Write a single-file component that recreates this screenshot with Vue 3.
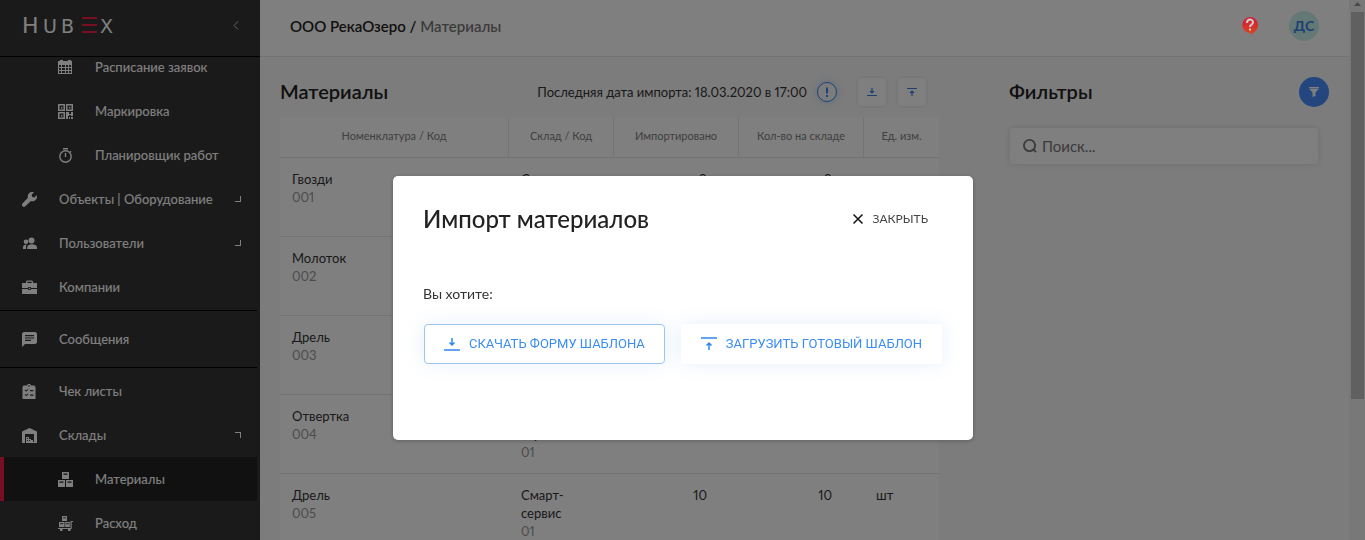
<script setup>
import { ref } from 'vue'

const search = ref('')

const groups = [
  [
    { label: 'Расписание заявок', icon: 'calendar', child: true },
    { label: 'Маркировка', icon: 'qr', child: true },
    { label: 'Планировщик работ', icon: 'timer', child: true },
    { label: 'Объекты | Оборудование', icon: 'wrench', arrow: 'down' },
    { label: 'Пользователи', icon: 'users', arrow: 'down' },
    { label: 'Компании', icon: 'case' }
  ],
  [{ label: 'Сообщения', icon: 'chat' }],
  [
    { label: 'Чек листы', icon: 'checklist' },
    { label: 'Склады', icon: 'warehouse', arrow: 'up' },
    { label: 'Материалы', icon: 'boxes', child: true, active: true },
    { label: 'Расход', icon: 'cart', child: true }
  ]
]

const icons = {
  calendar: 'M2 0h3v1h5V0h3v1h1v13H0V1h2zM1 5v2h2V5zM4 5v2h3V5zM8 5v2h2V5zM11 5v2h2V5zM1 8v2h2V8zM4 8v2h3V8zM8 8v2h2V8zM11 8v2h2V8zM1 11v2h2v-2zM4 11v2h3v-2zM8 11v2h2v-2zM11 11v2h2v-2z',
  qr: 'M0 0h7v7H0zM1.500 1.500v4h4v-4zM3 3h1.500v1.500H3zM8 0h7v7H8zM9.500 1.500v4h4v-4zM11 3h1.500v1.500H11zM0 8h7v7H0zM1.500 9.500v4h4v-4zM3 11h1.500v1.500H3zM8 8h3v2h2V8h2v4h-2v-1h-2v1h-1v3H8zM11 13h1v2h-1zM13 13h2v2h-2z',
  wrench: 'M14.800 3.200 12.400 5.600 10.300 5 9.600 2.700 12 .3C10.300-.3 8.200 0 6.900 1.400 5.700 2.600 5.400 4.300 5.900 5.800L.5 11.500C-.2 12.200-.2 13.400.5 14.200 1.300 15.100 2.600 15 3.300 14.300L8.900 8.900C10.500 9.500 12.300 9.200 13.600 7.900 14.900 6.700 15.300 4.800 14.800 3.200z',
  users: 'M9.500 1.500a3 3 0 1 1 0 6a3 3 0 0 1 0-6zM4 3.500a2.300 2.300 0 1 1 0 4.600A2.300 2.300 0 0 1 4 3.500zM5.200 13V11.500C5.200 9.500 7.500 8.300 10 8.300s5 1.200 5 3.200V13zM1 13v-2c0-1.500 1.500-2.300 3.500-2.400C4.200 9.500 4 10.300 4 11.500V13z',
  case: 'M4 3V1.500L5 .5h5l1 1V3h4v5H9V7H6v1H0V3zM5.300 3h4.400V1.700H5.300zM0 9h6v1h3V9h6v5H0zM6.800 7.700h1.400v1.600H6.800z',
  chat: 'M1.500 0h12L15 1.500v9L13.500 12H3l-3 3V1.500zM3 3v1.200h9V3zM3 5.400v1.200h9V5.400zM3 7.800V9h6V7.800z',
  checklist: 'M1.500 1.500H5C5 .5 6 0 7 0s2 .5 2 1.500h3.500L13.500 3v12H.5V3zM6 1.500v1h2v-1zM2.500 6l1.700 1.700L6.500 5.500 6 4.800 4.200 6.500l-1-1zM8 6v1.200h3.500V6zM2.500 10.500l1.700 1.700L6.500 10 6 9.300 4.200 11l-1-1zM8 10.500v1.200h3.500v-1.200z',
  warehouse: 'M7.500 0 15 3.500V15h-3V6H3v9H0V3.500zM4 9h3v2h2v1h2v2h1v1H4zM5 10v1h1v-1zM5 12v1h1v-1zM7 12v1h1v-1z',
  boxes: 'M4 0h7v7H4zM5.500 1.500v1.200h4V1.500zM0 8h7v7H0zM1.500 9.500v1.200h4V9.500zM8 8h7v7H8zM9.500 9.500v1.200h4V9.500z',
  cart: 'M4 0h5v5H4zM5.200 1.200v1h2.600v-1zM1 6h5.500v5H1zM2.200 7.200v1h3v-1zM7.200 6h4.600v5H7.200zM8.200 7.200v1h2.600v-1zM0 12h12.500V5H15v1h-1.300v7H12.500v2H10v-2H4.500v2H2v-2H0z'
}

const rows = [
  { name: 'Гвозди', code: '001', imported: '0', stock: '0' },
  { name: 'Молоток', code: '002', imported: '10', stock: '10' },
  { name: 'Дрель', code: '003', imported: '10', stock: '10' },
  { name: 'Отвертка', code: '004', imported: '10', stock: '10' },
  { name: 'Дрель', code: '005', imported: '10', stock: '10' }
]
</script>

<template>
  <div class="app">
    <aside class="sidebar">
      <div class="brand">
        <svg class="logo" viewBox="0 0 92 18" role="img" aria-label="HubEx">
          <text class="logo-big" x="-2" y="17">H</text>
          <text class="logo-small" x="19" y="17">U</text>
          <text class="logo-small" x="37" y="17">B</text>
          <path class="logo-bars" d="M58 1h15v2H58zM58 8h15v2H58zM58 15h15v2H58z" />
          <text class="logo-small" x="76" y="17">X</text>
        </svg>
        <button class="collapse" type="button" aria-label="Свернуть меню">
          <svg viewBox="0 0 6 9"><path d="M5 .5 1 4.500l4 4" /></svg>
        </button>
      </div>
      <nav class="nav">
        <ul v-for="(group, g) in groups" :key="g" class="group">
          <li v-for="item in group" :key="item.label">
            <a href="#" class="item" :class="{ child: item.child, active: item.active }">
              <svg v-if="item.icon === 'timer'" class="icon timer" viewBox="0 0 15 15">
                <circle cx="7.500" cy="8.500" r="5.700" />
                <path d="M5 .7h5M7.500 5v4M12 3.200l1 1" />
              </svg>
              <svg v-else class="icon" viewBox="0 0 15 15"><path fill-rule="evenodd" :d="icons[item.icon]" /></svg>
              <span class="label">{{ item.label }}</span>
              <span v-if="item.arrow" class="corner" :class="item.arrow"></span>
            </a>
          </li>
        </ul>
      </nav>
    </aside>

    <div class="main">
      <header class="topbar">
        <p class="crumbs">ООО РекаОзеро / <span>Материалы</span></p>
        <button class="help" type="button" aria-label="Помощь">
          <svg viewBox="0 0 16 18">
            <defs>
              <linearGradient id="help-fill" x1="0" y1="0" x2="0" y2="1">
                <stop offset="0" stop-color="#d41838" />
                <stop offset="1" stop-color="#d8481c" />
              </linearGradient>
            </defs>
            <path fill="url(#help-fill)" d="M8 0a8 8 0 0 1 8 8c0 5-4 7.500-7 10l-.5-2A8 8 0 1 1 8 0z" />
            <path class="question" d="M5 6c0-4.500 6-4.500 6-.6C11 7.500 8 7.700 8 10M8 11.500v2" />
          </svg>
        </button>
        <button class="avatar" type="button">ДС</button>
      </header>

      <div class="content">
        <section class="materials">
          <div class="toolbar">
            <h1>Материалы</h1>
            <p class="date">Последняя дата импорта: 18.03.2020 в 17:00</p>
            <svg class="info" viewBox="0 0 20 20"><circle cx="10" cy="10" r="9.500" /><path d="M10 5.500v6M10 13v2" /></svg>
            <button class="square" type="button" aria-label="Скачать">
              <svg viewBox="0 0 10 10"><path d="M0 8.500h10M5 1v5M3 4l2 2 2-2" /></svg>
            </button>
            <button class="square" type="button" aria-label="Загрузить">
              <svg viewBox="0 0 10 10"><path d="M0 1.500h10M5 9V4M3 6l2-2 2 2" /></svg>
            </button>
          </div>
          <table class="table">
            <colgroup>
              <col /><col class="c-stock" /><col class="c-num" /><col class="c-num" /><col class="c-unit" />
            </colgroup>
            <thead>
              <tr>
                <th>Номенклатура / Код</th>
                <th>Склад / Код</th>
                <th>Импортировано</th>
                <th>Кол-во на складе</th>
                <th>Ед. изм.</th>
              </tr>
            </thead>
            <tbody>
              <tr v-for="row in rows" :key="row.code">
                <td>{{ row.name }}<br /><span class="code">{{ row.code }}</span></td>
                <td>Смарт-<br />сервис<br /><span class="code">01</span></td>
                <td class="num">{{ row.imported }}</td>
                <td class="num">{{ row.stock }}</td>
                <td>шт</td>
              </tr>
            </tbody>
          </table>
        </section>

        <section class="filters">
          <div class="filters-head">
            <h2>Фильтры</h2>
            <button class="funnel" type="button" aria-label="Фильтр">
              <svg viewBox="0 0 10 10"><path d="M0 0h10v1H0zM0 1.500h10L6.500 5.500V9L3.500 10V5.500z" /></svg>
            </button>
          </div>
          <label class="search">
            <svg viewBox="0 0 15 15"><circle cx="7" cy="7" r="6" /><path d="M11 11l3 3" /></svg>
            <input v-model="search" type="text" placeholder="Поиск..." aria-label="Поиск" />
          </label>
        </section>
      </div>
    </div>

    <div class="scrollbar" aria-hidden="true">
      <svg viewBox="0 0 7 4"><path d="M3.500 0 7 4H0z" /></svg>
      <div class="thumb"></div>
    </div>

    <div class="overlay">
      <div class="modal" role="dialog" aria-modal="true" aria-labelledby="modal-title">
        <div class="modal-head">
          <h2 id="modal-title">Импорт материалов</h2>
          <button class="close" type="button">
            <svg viewBox="0 0 10 10"><path d="M.5.5l9 9M9.500.5l-9 9" /></svg>
            ЗАКРЫТЬ
          </button>
        </div>
        <p class="question-text">Вы хотите:</p>
        <div class="actions">
          <button class="action outlined" type="button">
            <svg viewBox="0 0 16 16"><path d="M0 14h16M8 2v7M5.500 6.500 8 9l2.500-2.500" /></svg>
            СКАЧАТЬ ФОРМУ ШАБЛОНА
          </button>
          <button class="action" type="button">
            <svg viewBox="0 0 16 16"><path d="M0 2h16M8 14V7M5.500 9.500 8 7l2.500 2.500" /></svg>
            ЗАГРУЗИТЬ ГОТОВЫЙ ШАБЛОН
          </button>
        </div>
      </div>
    </div>
  </div>
</template>

<style>
body {
  margin: 0;
  overflow: hidden;
}
</style>

<style scoped>
.app {
  display: flex;
  height: 100vh;
  overflow: hidden;
  font-family: Lato, "Open Sans", sans-serif;
  font-size: 13px;
  line-height: 18px;
  font-variant-numeric: proportional-nums;
  color: #333;
  background: #f8f8f8;
}
.app * { box-sizing: border-box; }
p, h1, h2, ul { margin: 0; padding: 0; }
ul { list-style: none; }
button {
  display: flex;
  align-items: center;
  justify-content: center;
  padding: 0;
  border: 0;
  background: none;
  font: inherit;
  color: inherit;
  cursor: pointer;
}
svg { display: block; flex: none; overflow: visible; }

.sidebar {
  display: flex;
  flex-direction: column;
  flex: none;
  width: 260px;
  background: #343434;
  color: #fff;
}
.brand {
  display: flex;
  flex: none;
  align-items: center;
  justify-content: space-between;
  height: 57px;
  padding: 0 21px 6px 24px;
  border-bottom: 1px solid #000;
}
.logo { width: 92px; height: 18px; fill: #fff; font-family: "DejaVu Sans", sans-serif; }
.logo-big { font-size: 22px; }
.logo-small { font-size: 19px; }
.logo-bars { fill: #f01c48; }
.collapse svg { width: 6px; height: 9px; fill: none; stroke: #ccc; }
.nav { flex: 1; overflow: hidden; }
.group {
  width: 257px;
  padding: 1px 0;
  border-bottom: 1px solid #000;
}
.group:first-child { margin-top: -13px; }
.group:nth-child(2) { padding: 6px 0; }
.group:last-child { border-bottom: 0; }
.item {
  display: flex;
  align-items: center;
  height: 44px;
  padding: 0 16px 0 22px;
  border-left: 0 solid #f01c48;
  color: #fff;
  font-weight: 500;
  text-decoration: none;
}
.item.child { padding-left: 58px; }
.item.active { padding-left: 54px; border-left-width: 4px; background: #222; }
.icon { width: 15px; height: 15px; fill: #fff; }
.timer { fill: none; stroke: #fff; stroke-width: 1.4; }
.label { flex: 1; margin-left: 22px; white-space: nowrap; }
.corner { width: 6px; height: 6px; border-right: 1px solid #fff; }
.corner.down { border-bottom: 1px solid #fff; }
.corner.up { border-top: 1px solid #fff; }

.main {
  display: flex;
  flex: 1;
  flex-direction: column;
  min-width: 0;
}
.topbar {
  display: flex;
  flex: none;
  align-items: center;
  height: 57px;
  padding: 0 30px 4px;
  border-bottom: 1px solid #e4e4e4;
  background: #fff;
}
.crumbs { flex: 1; color: #222; font-size: 15px; font-weight: 600; }
.crumbs span { color: #777; }
.help { position: relative; z-index: 2; margin-right: 31px; }
.help svg { width: 16px; height: 18px; }
.question { fill: none; stroke: #ccc; stroke-width: 2; }
.avatar {
  width: 30px;
  height: 30px;
  border-radius: 50%;
  background: #c8f0ea;
  color: #3d7ee8;
  font-size: 14px;
  font-weight: 700;
}
.content {
  display: flex;
  flex: 1;
  gap: 70px;
  padding: 20px;
}
.materials { flex: 1; min-width: 0; }
.toolbar {
  display: flex;
  align-items: center;
  height: 30px;
  margin-bottom: 10px;
  padding-right: 13px;
}
h1, .filters h2 { flex: 1; color: #222; font-size: 20px; font-weight: 600; line-height: 24px; }
.toolbar h1, .filters-head h2 { padding-bottom: 2px; }
.date { margin-right: 10px; white-space: nowrap; }
.info {
  width: 20px;
  height: 20px;
  margin-right: 21px;
  border-radius: 50%;
  box-shadow: 0 0 8px rgba(60, 140, 240, 0.3);
  fill: none;
  stroke: #2f86f0;
}
.info path { stroke-width: 2; }
.square {
  width: 28px;
  height: 28px;
  border-radius: 3px;
  background: #fff;
  box-shadow: 0 0 3px rgba(60, 100, 180, 0.2);
}
.square + .square { margin-left: 12px; }
.square svg { width: 10px; height: 10px; fill: none; stroke: #3d7ee8; stroke-width: 1.2; }
.table {
  width: 100%;
  table-layout: fixed;
  border-spacing: 0;
  background: #fff;
}
.c-stock { width: 105px; }
.c-num { width: 125px; }
.c-unit { width: 75px; }
th {
  height: 41px;
  padding: 0 0 3px;
  border-right: 1px solid #e8e8e8;
  border-bottom: 1px solid #e6e6e6;
  color: #808080;
  font-size: 11px;
  font-weight: 400;
}
th:last-child { border-right: 0; }
td {
  padding: 12px;
  border-bottom: 1px solid #e9e9e9;
  vertical-align: top;
}
td.num { padding-right: 32px; text-align: right; }
.code { color: #999; }

.filters { flex: none; width: 320px; }
.filters-head { display: flex; align-items: center; height: 30px; }
.funnel { width: 30px; height: 30px; border-radius: 50%; background: #478cff; }
.funnel svg { width: 10px; height: 10px; fill: #fff; }
.search {
  display: flex;
  align-items: center;
  gap: 5px;
  height: 36px;
  margin: 21px 11px 0 1px;
  padding: 0 13px;
  border-radius: 3px;
  background: #fff;
  box-shadow: 0 0 6px rgba(0, 0, 0, 0.12);
}
.search svg { width: 14px; height: 14px; fill: none; stroke: #777; stroke-width: 2; }
.search input {
  flex: 1;
  min-width: 0;
  padding: 0;
  border: 0;
  outline: 0;
  background: none;
  font: inherit;
  font-size: 15px;
}
.search input::placeholder { color: #777; opacity: 1; }

.scrollbar {
  display: flex;
  flex: none;
  flex-direction: column;
  align-items: center;
  width: 16px;
  padding-top: 2px;
  background: #f1f1f1;
}
.scrollbar svg { width: 7px; height: 4px; margin-bottom: 6px; fill: #909090; }
.thumb { width: 13px; height: 72%; background: #c1c1c1; }

.overlay {
  position: fixed;
  z-index: 1;
  inset: 0;
  display: flex;
  align-items: flex-start;
  justify-content: center;
  padding: 176px 0 0 1px;
  background: rgba(0, 0, 0, 0.5);
}
.modal {
  width: 580px;
  padding: 29px 30px 76px;
  border-radius: 5px;
  background: #fff;
  box-shadow: 0 1px 4px rgba(0, 0, 0, 0.25);
}
.modal-head { display: flex; align-items: center; justify-content: space-between; padding-right: 15px; }
.modal-head h2 { color: #222; font-size: 24px; font-weight: 500; line-height: 28px; }
.close { gap: 10px; font-size: 12px; color: #444; }
.close svg { width: 10px; height: 10px; fill: none; stroke: #111; stroke-width: 1.500; }
.question-text { margin-top: 51px; font-size: 14px; line-height: 20px; }
.actions { display: flex; gap: 16px; margin: 20px 0 0 1px; }
.action {
  gap: 9px;
  height: 40px;
  padding: 0 19px;
  border: 1px solid transparent;
  border-radius: 4px;
  background: #fff;
  box-shadow: 0 0 20px rgba(61, 142, 240, 0.12);
  color: #3a8df2;
  font-family: Roboto, sans-serif;
  white-space: nowrap;
}
.action.outlined { border-color: #9cc6f8; }
.action svg { width: 16px; height: 16px; fill: none; stroke: #2f86f0; stroke-width: 1.500; }
</style>
